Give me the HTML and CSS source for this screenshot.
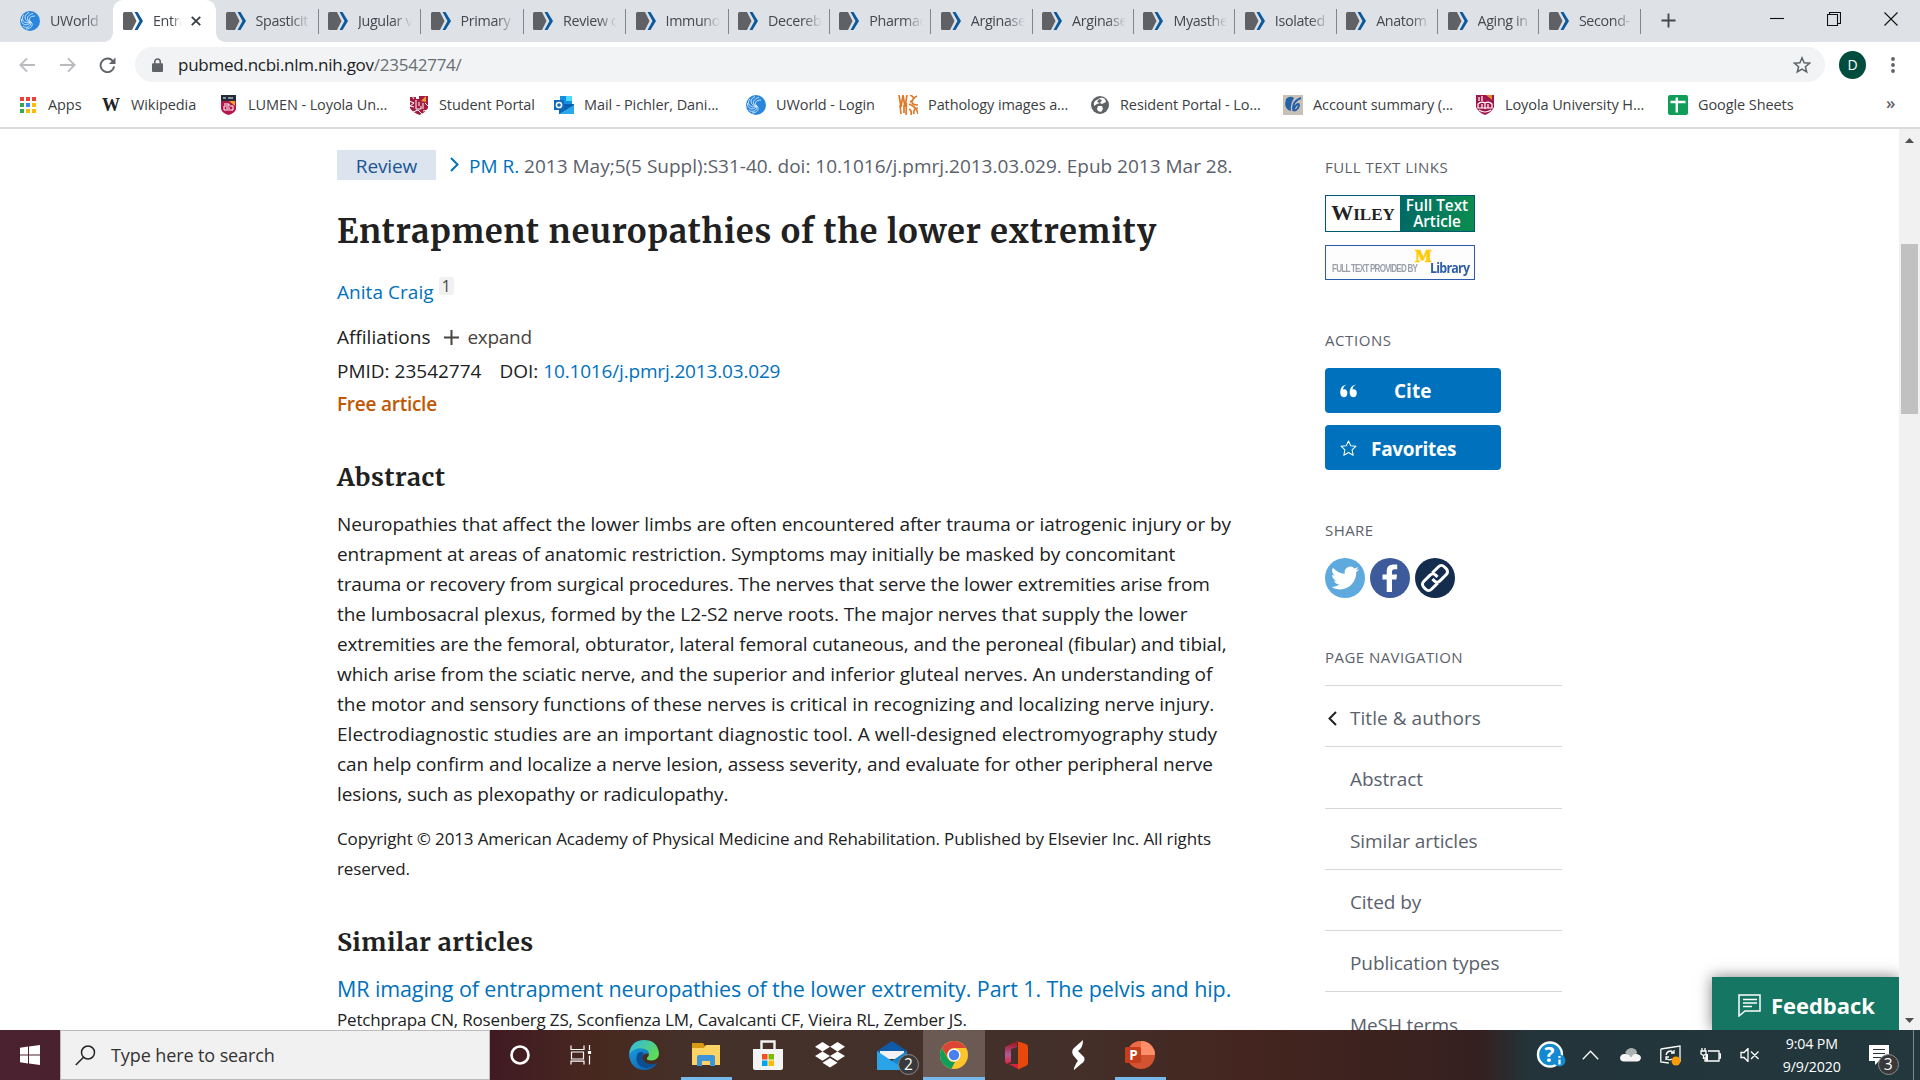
FILE: index.html
```html
<!DOCTYPE html>
<html lang="en">
<head>
<meta charset="utf-8">
<title>Entrapment neuropathies of the lower extremity - PubMed</title>
<link rel="stylesheet" href="styles.css">
</head>
<body>
<svg class="defs" width="0" height="0" aria-hidden="true">
  <defs>
    <linearGradient id="edgeBlue" x1="0" y1="0" x2="1" y2="1"><stop offset="0" stop-color="#1b9de2"/><stop offset="1" stop-color="#0c59a4"/></linearGradient>
    <linearGradient id="edgeGreen" x1="0" y1="0" x2="1" y2="0.6"><stop offset="0" stop-color="#2fb4ee"/><stop offset="1" stop-color="#5fdc56"/></linearGradient>
    <linearGradient id="officeRed" x1="0" y1="0" x2="0" y2="1"><stop offset="0" stop-color="#a30d12"/><stop offset=".6" stop-color="#b45a9a"/><stop offset="1" stop-color="#e0203c"/></linearGradient>
    <symbol id="pubmed" viewBox="0 0 20 18"><path d="M1.500 0H9l4.500 9L9 18H1.500Q0 18 0 16.500V1.500Q0 0 1.500 0z" fill="#5f6165"/><path d="M11.500 0H14.500L20 9l-5.500 9H11.500L16.500 9z" fill="#0b5a9d"/></symbol>
    <symbol id="uworld" viewBox="0 0 20 20"><circle cx="10" cy="10" r="10" fill="#2a86dc"/><g fill="none" stroke="#d9ecfb" stroke-width=".9"><path d="M11 11C8 9 9 5 15 5M11 11C6 10 6 4 13 2.500M11 11C4 11 3 4 9 1.500M11 11C4 14 0 8 4 4M11 11C7 16 1 14 1.500 8M11 11c0 5-5 7-8 4M11 11c3 3 0 7-5 7"/></g></symbol>
  </defs>
</svg>

<header class="browser">
  <div class="tabs">
    <div class="tab first"><svg class="fav"><use href="#uworld"/></svg><span>UWorld</span></div>
    <div class="tab active"><svg class="fav"><use href="#pubmed"/></svg><span>Entra</span><svg class="close" viewBox="0 0 10 10"><path d="M.8.8l8.400 8.400M9.200.8L.8 9.200"/></svg></div>
    <div class="tab"><svg class="fav"><use href="#pubmed"/></svg><span>Spasticit</span></div>
    <div class="tab"><svg class="fav"><use href="#pubmed"/></svg><span>Jugular v</span></div>
    <div class="tab"><svg class="fav"><use href="#pubmed"/></svg><span>Primary</span></div>
    <div class="tab"><svg class="fav"><use href="#pubmed"/></svg><span>Review o</span></div>
    <div class="tab"><svg class="fav"><use href="#pubmed"/></svg><span>Immuno</span></div>
    <div class="tab"><svg class="fav"><use href="#pubmed"/></svg><span>Decereb</span></div>
    <div class="tab"><svg class="fav"><use href="#pubmed"/></svg><span>Pharmac</span></div>
    <div class="tab"><svg class="fav"><use href="#pubmed"/></svg><span>Arginase</span></div>
    <div class="tab"><svg class="fav"><use href="#pubmed"/></svg><span>Arginase</span></div>
    <div class="tab"><svg class="fav"><use href="#pubmed"/></svg><span>Myasthe</span></div>
    <div class="tab"><svg class="fav"><use href="#pubmed"/></svg><span>Isolated</span></div>
    <div class="tab"><svg class="fav"><use href="#pubmed"/></svg><span>Anatom</span></div>
    <div class="tab"><svg class="fav"><use href="#pubmed"/></svg><span>Aging in</span></div>
    <div class="tab"><svg class="fav"><use href="#pubmed"/></svg><span>Second-</span></div>
    <svg class="newtab" viewBox="0 0 16 16"><path d="M8 .5v15M.5 8h15"/></svg>
    <div class="winctl">
      <svg width="14" height="14" viewBox="0 0 14 14"><path d="M0 6.500h14"/></svg>
      <svg width="14" height="14" viewBox="0 0 14 14"><path d="M.5 2.500h10v11h-10zM2.500 2.500v-2h11v11h-3"/></svg>
      <svg width="14" height="14" viewBox="0 0 14 14"><path d="M.5.5l13 13M13.500.5l-13 13"/></svg>
    </div>
  </div>

  <div class="toolbar">
    <svg class="nav off" viewBox="0 0 18 16"><path d="M17 8H2M8.500 1L1.500 8l7 7"/></svg>
    <svg class="nav off" viewBox="0 0 18 16"><path d="M1 8h15M9.500 1l7 7-7 7"/></svg>
    <svg class="nav" viewBox="0 0 18 16"><path d="M15 4.500A7.200 7.200 0 1 0 16 9.500"/><path class="solid" d="M17.500 0v7h-7z"/></svg>
    <div class="omnibox">
      <svg class="lock" viewBox="0 0 12 15"><path d="M1 5.500h10q1 0 1 1V14q0 1-1 1H1q-1 0-1-1V6.500q0-1 1-1z"/><path class="ring" d="M3 6V4a3 3 0 0 1 6 0v2"/></svg>
      <span class="url">pubmed.ncbi.nlm.nih.gov<i>/23542774/</i></span>
      <svg class="star" viewBox="0 0 18 18"><path d="M9 1.800l2.100 5 5.400.4-4.100 3.500 1.300 5.300L9 13.200 4.300 16l1.300-5.300L1.500 7.200l5.400-.4z"/></svg>
    </div>
    <div class="avatar">D</div>
    <svg class="dots" viewBox="0 0 4 16"><circle cx="2" cy="2" r="1.900"/><circle cx="2" cy="8" r="1.900"/><circle cx="2" cy="14" r="1.900"/></svg>
  </div>

  <nav class="bookmarks">
    <a><svg viewBox="0 0 20 20"><g fill="#ea4335"><path d="M2 2h4v4H2zM8 2h4v4H8zM14 2h4v4h-4z"/></g><path fill="#34a853" d="M2 8h4v4H2zM2 14h4v4H2z"/><path fill="#4285f4" d="M8 8h4v4H8z"/><path fill="#fbbc04" d="M14 8h4v4h-4zM8 14h4v4H8zM14 14h4v4h-4z"/></svg>Apps</a>
    <a><b class="wiki">W</b>Wikipedia</a>
    <a><svg viewBox="0 0 20 20"><path fill="#222b3a" d="M3 0h15v6H3z"/><path fill="#b5174b" d="M3 6h15v8q-1 4-7.500 6Q4 18 3 14z"/><path fill="#f0a22e" d="M11 6h6v5z"/><path stroke="#fff" fill="none" d="M6 9h5v2H6v4h9v-4h-3M8 13h4M5 3h3M10 3h5"/></svg>LUMEN - Loyola Un...</a>
    <a><svg viewBox="0 0 20 20"><path fill="#a31c3f" d="M1 2h6v2h3V1h9v12q-2 4-8.500 7Q3 17 1 13z"/><path fill="#eda02e" d="M12 6l5-5v6z"/><path stroke="#fff" fill="none" d="M0 6l5 2-4 3 4 1M7 5v9h5v-3M10 7v4M14 8v6M16 8l3 3M4 17l5-2 4 4M19 15l-5 1M3 1l2 3"/></svg>Student Portal</a>
    <a><svg viewBox="0 0 20 20"><path fill="#1490df" d="M6 1h12v10H6z"/><path fill="#50d9ff" d="M12 1h6v5h-6z"/><path fill="#0a5fb0" d="M5 9h15v10H5z"/><path fill="#28a8ea" d="M5 19l15-9v9z"/><path fill="#0f6cbd" d="M0 5h10v10H0z"/><circle cx="5" cy="10" r="2.600" fill="none" stroke="#fff" stroke-width="1.500"/></svg>Mail - Pichler, Dani...</a>
    <a><svg viewBox="0 0 20 20"><use href="#uworld"/></svg>UWorld - Login</a>
    <a><svg viewBox="0 0 20 20"><path fill="none" stroke="#e07a2b" stroke-width="1.700" d="M1 0l2 12 2-12 2 12 2-12M2 10l1 9M6 10v8M8.500 8l-.5 12M12 0q7 3 0 7M19 1q-5 3-5 6t6 3M11 9q8 3 9 10M11 14q3 1 2 6M20 13q-5 0-4 6"/></svg>Pathology images a...</a>
    <a><svg viewBox="0 0 20 20"><circle cx="10" cy="10" r="9" fill="#5f6368"/><path fill="#fff" d="M10 3q5-1 6 4l-4 2-2-1-3 1-3 2q-1-3 1-5zM8 11h4l1 3-2 3-3-1-1-2z"/><path fill="#5f6368" d="M9 4l3 1-2 3-3-1z"/></svg>Resident Portal - Lo...</a>
    <a><svg viewBox="0 0 20 20"><path fill="#c9c1b6" d="M0 0h20v20H0z"/><path fill="#2461a8" d="M3 4q4-4 8-1-4 6-3 13Q0 14 3 4z"/><path fill="none" stroke="#2461a8" stroke-width="2" d="M18 3q-8 3-8 10 1 5 5 0 2-4 0-4-3 1-5 7"/></svg>Account summary (...</a>
    <a><svg viewBox="0 0 20 20"><path fill="#a0154b" d="M1 0h18v12q-2 5-9 8-7-3-9-8z"/><path fill="#e08a2c" d="M11 0h6v5z"/><path stroke="#fff" fill="none" stroke-width="1.200" d="M4 2v4M7 1v5M3 9q3-3 7-1 4-2 7 1v4H3zM7 9v4M10 8v6M13 9v4M4 15q6 4 12 0"/></svg>Loyola University H...</a>
    <a><svg viewBox="0 0 20 20"><rect width="20" height="20" rx="2" fill="#0f9d58"/><path stroke="#fff" stroke-width="2.400" d="M2.500 7h15M8.800 2.500v15"/></svg>Google Sheets</a>
    <span class="more">»</span>
  </nav>
</header>

<div class="viewport">
  <div class="page">
    <main>
      <div class="source">
        <span class="badge">Review</span>
        <svg viewBox="0 0 9 15"><path d="M1 1l6.500 6.500L1 14"/></svg>
        <span class="cite"><a>PM R.</a> 2013 May;5(5 Suppl):S31-40. doi: 10.1016/j.pmrj.2013.03.029. Epub 2013 Mar 28.</span>
      </div>
      <h1>Entrapment neuropathies of the lower extremity</h1>
      <div class="author"><a>Anita Craig</a><sup>1</sup></div>
      <div class="line affil">Affiliations<svg viewBox="0 0 15 15"><path d="M7.500 0v15M0 7.500h15"/></svg><span class="expand">expand</span></div>
      <div class="line ids"><span>PMID: 23542774</span><span>DOI: <a>10.1016/j.pmrj.2013.03.029</a></span></div>
      <div class="line free">Free article</div>
      <h2>Abstract</h2>
      <p class="abstract">
        <span>Neuropathies that affect the lower limbs are often encountered after trauma or iatrogenic injury or by</span>
        <span>entrapment at areas of anatomic restriction. Symptoms may initially be masked by concomitant</span>
        <span>trauma or recovery from surgical procedures. The nerves that serve the lower extremities arise from</span>
        <span>the lumbosacral plexus, formed by the L2-S2 nerve roots. The major nerves that supply the lower</span>
        <span>extremities are the femoral, obturator, lateral femoral cutaneous, and the peroneal (fibular) and tibial,</span>
        <span>which arise from the sciatic nerve, and the superior and inferior gluteal nerves. An understanding of</span>
        <span>the motor and sensory functions of these nerves is critical in recognizing and localizing nerve injury.</span>
        <span>Electrodiagnostic studies are an important diagnostic tool. A well-designed electromyography study</span>
        <span>can help confirm and localize a nerve lesion, assess severity, and evaluate for other peripheral nerve</span>
        <span>lesions, such as plexopathy or radiculopathy.</span>
      </p>
      <p class="copyright">Copyright © 2013 American Academy of Physical Medicine and Rehabilitation. Published by Elsevier Inc. All rights<br>reserved.</p>
      <h2 class="similar">Similar articles</h2>
      <a class="result">MR imaging of entrapment neuropathies of the lower extremity. Part 1. The pelvis and hip.</a>
      <div class="result-authors">Petchprapa CN, Rosenberg ZS, Sconfienza LM, Cavalcanti CF, Vieira RL, Zember JS.</div>
    </main>

    <aside>
      <h3>FULL TEXT LINKS</h3>
      <div class="wiley"><span class="wl">W<small>ILEY</small></span><span class="wr">Full Text<br>Article</span></div>
      <div class="mlib"><span class="by">FULL TEXT PROVIDED BY</span><b class="m">M</b><span class="lib">Library</span></div>
      <h3 class="h-actions">ACTIONS</h3>
      <button><svg viewBox="0 0 18 15"><path fill="#fff" d="M7.500.5Q3.500 1.500 3.200 5.800 7.800 5 7.800 9.800 7.500 14 4 14 .3 14 .2 8.500.3 1.500 7.500.5zM17.500.5q-4 1-4.300 5.300 4.600-.8 4.600 4Q17.500 14 14 14q-3.700 0-3.800-5.500.1-7 7.300-8z"/></svg><span>Cite</span></button>
      <button class="fave"><svg viewBox="0 0 18 17"><path fill="none" stroke="#fff" stroke-width="1.100" stroke-linejoin="round" d="M9 1l2.300 5 5.700.6-4.200 3.900 1.200 5.700L9 13.300l-5 2.900 1.200-5.700L1 6.600 6.700 6z"/></svg><span>Favorites</span></button>
      <h3 class="h-share">SHARE</h3>
      <div class="share">
        <svg viewBox="0 0 40 40"><circle cx="20" cy="20" r="20" fill="#5eaade"/><path transform="translate(6 6) scale(1.170)" fill="#fff" d="M23.950 4.570a10 10 0 0 1-2.820.77 4.960 4.960 0 0 0 2.160-2.720c-.95.56-2 .96-3.130 1.180a4.920 4.920 0 0 0-8.380 4.480C7.690 8.100 4.070 6.130 1.640 3.160a4.820 4.820 0 0 0-.67 2.480c0 1.710.87 3.210 2.190 4.100a4.900 4.900 0 0 1-2.230-.62v.06a4.920 4.920 0 0 0 3.950 4.830 5 5 0 0 1-2.210.08 4.940 4.940 0 0 0 4.600 3.420A9.870 9.870 0 0 1 0 19.540a13.990 13.990 0 0 0 7.550 2.210c9.050 0 14-7.500 14-13.980 0-.21 0-.42-.02-.63a9.940 9.940 0 0 0 2.460-2.550z"/></svg>
        <svg viewBox="0 0 40 40"><circle cx="20" cy="20" r="20" fill="#3d5b9b"/><path fill="#fff" d="M16.700 34V21.500h-4.200v-5h4.200V13q0-6.500 6.500-6.500h4v4.700h-2.700q-2.500 0-2.500 2.400v2.900h5l-.6 5H22V34z"/></svg>
        <svg viewBox="0 0 40 40"><circle cx="20" cy="20" r="20" fill="#142c4e"/><g transform="rotate(-45 20 20)" fill="none" stroke="#fff" stroke-width="3"><path d="M18.500 25.500H9.500a4 4 0 0 1-4-4v-3a4 4 0 0 1 4-4h9a4 4 0 0 1 4 4v2.500"/><path d="M21.500 14.500h9a4 4 0 0 1 4 4v3a4 4 0 0 1-4 4h-9a4 4 0 0 1-4-4V19"/></g></svg>
      </div>
      <h3 class="h-nav">PAGE NAVIGATION</h3>
      <ul>
        <li><svg viewBox="0 0 9 15"><path d="M8 1L1.500 7.500 8 14"/></svg><span class="n1">Title &amp; authors</span></li>
        <li><span>Abstract</span></li>
        <li><span>Similar articles</span></li>
        <li><span>Cited by</span></li>
        <li><span>Publication types</span></li>
        <li><span>MeSH terms</span></li>
      </ul>
    </aside>
    <div class="feedback"><svg viewBox="0 0 23 23"><path d="M1 1h21v16H7l-6 5z"/><path d="M5 5.500h14M5 9h14M5 12.500h9"/></svg><span>Feedback</span></div>
  </div>
  <div class="scrollbar">
    <svg viewBox="0 0 9 5"><path d="M4.500 0L9 5H0z"/></svg>
    <div class="thumb"></div>
    <svg class="down" viewBox="0 0 9 5"><path d="M0 0h9L4.500 5z"/></svg>
  </div>
</div>

<footer class="taskbar">
  <div class="start"><svg width="20" height="20" viewBox="0 0 20 20"><path fill="#fff" d="M0 2.800L8 1.600v8H0zM9 1.400L20 0v9.600H9zM0 10.500h8v8L0 17.300zM9 10.500h11V20L9 18.600z"/></svg></div>
  <div class="search"><svg width="21" height="21" viewBox="0 0 21 21"><circle cx="13" cy="7.500" r="6.500"/><path d="M8.500 12.300L.8 20"/></svg><span>Type here to search</span></div>
  <div class="apps">
    <div><svg viewBox="0 0 30 30"><circle cx="15" cy="15" r="8.500" fill="none" stroke="#fff" stroke-width="2.600"/></svg></div>
    <div><svg viewBox="0 0 30 30" fill="none" stroke="#fff" stroke-width="1.200"><path d="M4 5.500v4h13v-4M4.500 12h12v7h-12zM4 24.500v-3.300h13v3.300M22.500 5v5M22.500 15.500v9"/><path fill="#fff" d="M21.500 11.500h2v2h-2z"/></svg></div>
    <div><svg viewBox="0 0 30 30"><path fill="url(#edgeBlue)" d="M0 15Q2 7 11 7q9 0 10 7-6-2-8 3-2 6 5 8 6 1 10-2-4 7-12 7Q2 30 0 15z"/><path fill="url(#edgeGreen)" d="M0 14Q2 0 15 0q13 0 15 13 0 7-7 7.500-6 0-5-2.500 4-4 0-8Q8 5 0 14z"/><path fill="#0b4f92" d="M9 13q-4 8 2 13 8 5 17-3-7 3-12-1-5-4-1-9-3-2-6 0z"/></svg></div>
    <div class="open"><svg viewBox="0 0 30 30"><path fill="#d99a13" d="M1 3h11l2 3v6H1z"/><path fill="#fdd365" d="M1 8h12l2-3h14v20H1z"/><path fill="#3e94d8" d="M6 26V17q0-2 2-2h14q2 0 2 2v9h-5v-5h-8v5z"/></svg></div>
    <div><svg viewBox="0 0 30 30"><path fill="none" stroke="#f2f2f2" stroke-width="2.400" d="M8.500 10V1.500h13V10"/><path fill="#f4f4f4" d="M0 9h30v19q0 2-2 2H2q-2 0-2-2z"/><path fill="#f25022" d="M9 14h5.500v5.500H9z"/><path fill="#7fba00" d="M15.500 14H21v5.500h-5.500z"/><path fill="#00a4ef" d="M9 20.500h5.500V26H9z"/><path fill="#ffb900" d="M15.500 20.500H21V26h-5.500z"/></svg></div>
    <div><svg viewBox="0 0 30 30"><path fill="#fff" d="M7.500 2L15 6.700 7.500 11.400 0 6.700zM22.500 2L30 6.700l-7.500 4.700L15 6.700zM7.500 11.400l7.500 4.700-7.500 4.700L0 16.100zM22.500 11.400l7.500 4.700-7.500 4.700-7.500-4.700zM15 18l7.500 4.700L15 27.500l-7.500-4.800z"/></svg></div>
    <div class="mail"><svg viewBox="0 0 30 30"><path fill="#0f5ba8" d="M0 11L15 1l15 10v4H0z"/><path fill="#f2f2f2" d="M3 11h24v8H3z"/><path fill="#2ba3e8" d="M0 11l15 10 15-10v19H0z"/><path fill="#1583cc" d="M30 11v19L15 21z"/></svg><i class="count">2</i></div>
    <div class="open current"><svg viewBox="0 0 30 30"><circle cx="15" cy="15" r="14" fill="#fbc52d"/><path fill="#db4437" d="M2.900 8A14 14 0 0 1 27.100 8H15a7 7 0 0 0-6.500 9z"/><path fill="#0f9d58" d="M2.900 8l6 10.500A7 7 0 0 0 16 22l-3.500 6.800A14 14 0 0 1 2.900 8z"/><circle cx="15" cy="15" r="6.500" fill="#fff"/><circle cx="15" cy="15" r="5.200" fill="#4a80ee"/></svg></div>
    <div><svg viewBox="0 0 30 30"><path fill="url(#officeRed)" d="M4 7L16 1v6l-6 2v13l-4 2q-2-1-2-3z"/><path fill="#d8213f" d="M8 24h10v5.500z"/><path fill="#e8480c" d="M16 1l9 3q2 1 2 3v16q0 2-2 3l-8 3.500V1z"/></svg></div>
    <div><svg viewBox="0 0 30 30"><path fill="#fff" d="M20 0q0 8-5 11l6 6q2 4-3 7l-7 6q-1-1 3-8l1-1-5-6q-2-4 1-7z"/></svg></div>
    <div class="open"><svg viewBox="0 0 30 30"><circle cx="16" cy="15" r="14" fill="#d35230"/><path fill="#ed6c47" d="M16 15V1A14 14 0 0 0 2 15z"/><path fill="#ff8f6b" d="M16 1a14 14 0 0 1 14 14H16z"/><rect y="7" width="16" height="16" rx="1.500" fill="#c43e1c"/><text x="4.300" y="20" font-family="Open Sans" font-weight="700" font-size="13.500" fill="#fff">P</text></svg></div>
  </div>
  <div class="tray">
    <div><svg width="30" height="30" viewBox="0 0 30 30"><circle cx="14" cy="14.500" r="12" fill="#1389cf" stroke="#fff" stroke-width="2.400"/><text x="8.500" y="22" font-family="Open Sans" font-weight="700" font-size="21" fill="#fff">?</text><circle cx="23.500" cy="20.500" r="6" fill="#1389cf"/><path stroke="#fff" stroke-width="2.200" d="M23.500 19.500v5M23.500 16v2"/></svg></div>
    <div><svg width="17" height="10" viewBox="0 0 17 10"><path class="ln" d="M.8 9.200L8.500 1.200l7.700 8"/></svg></div>
    <div><svg width="21" height="14" viewBox="0 0 21 14"><path fill="#a9b1b3" d="M5 5q2-5 7-5 5 1 5 5l-5 4z"/><path fill="#f4f5f5" d="M4 13.500q-4 0-4-4 1-4 5-3.500 4-.5 6 3 3-4 6-3 4 1 4 4-1 3.500-4 3.500z"/></svg></div>
    <div><svg width="21" height="21" viewBox="0 0 21 21"><path class="ln" d="M.8 4L20 1v16M.8 4v13l8 1M6 10q1-4 5-4l3 2M14 5v3h-3M6 15v-3h3M6 13q2 3 6 1"/><circle cx="16" cy="16" r="4.500" fill="#fb9b0c"/></svg></div>
    <div><svg width="21" height="15" viewBox="0 0 21 15"><path class="ln" d="M8 3h11v10H5V9M19 6h1.500v4H19M2 0v3M5 0v3M1 3h5v3L3.500 7.500 1 6zM3.500 8v3"/><path fill="#fff" d="M5.500 6H8v7H5.500z"/></svg></div>
    <div><svg width="20" height="14" viewBox="0 0 20 14"><path class="ln" d="M1 4.500h3l4-4v13l-4-4H1zM11 3.500l7.500 7.500M18.500 3.500L11 11"/></svg></div>
  </div>
  <div class="clock"><span>9:04 PM</span><span>9/9/2020</span></div>
  <div class="notif"><svg width="20" height="20" viewBox="0 0 20 20"><path fill="#fff" d="M0 0h20v16H10l-4 4v-4H0z"/><path stroke="#23363a" d="M4 4.500h12M4 8.500h12M4 12.500h8"/></svg><i class="count">3</i></div>
</footer>
</body>
</html>
```
FILE: styles.css
```css
* { box-sizing: border-box; }
body {
  margin: 0;
  width: 1920px;
  height: 1080px;
  overflow: hidden;
  display: flex;
  flex-direction: column;
  font-family: "Open Sans", sans-serif;
  color: #212121;
  background: #fff;
  white-space: nowrap;
}
svg { flex: none; display: block; }
.defs { position: absolute; }
i { font-style: normal; }

/* Browser chrome */
.browser { height: 129px; border-bottom: 2px solid #dadce0; }
.tabs { display: flex; height: 42px; background: #dee1e6; position: relative; }
.tab {
  flex: none;
  display: flex;
  align-items: center;
  width: 101.36px;
  height: 42px;
  padding-left: 9.5px;
  font-size: 14.3px;
  letter-spacing: -0.35px;
  color: #45494d;
  background: linear-gradient(#80868b, #80868b) 100% 9px / 1px 25px no-repeat;
}
.tab:nth-child(n+3):nth-child(-n+7) { width: 102.5px; }
.tab .fav { width: 20px; height: 18px; }
.tab span {
  width: 54px;
  margin: 0 0 1px 10px;
  overflow: hidden;
  -webkit-mask-image: linear-gradient(90deg, #000 65%, transparent 100%);
  mask-image: linear-gradient(90deg, #000 65%, transparent 100%);
}
.tab.first { width: 113px; padding-left: 20px; background: none; }
.tab.first .fav { height: 20px; }
.tab.active {
  position: relative;
  width: 103px;
  padding-left: 10px;
  background: #fff;
  border-radius: 10px 10px 0 0;
}
.tab.active::before, .tab.active::after {
  content: "";
  position: absolute;
  bottom: 0;
  width: 9px;
  height: 9px;
}
.tab.active::before { left: -9px; background: radial-gradient(circle at 0 0, transparent 8.5px, #fff 9px); }
.tab.active::after { right: -9px; background: radial-gradient(circle at 100% 0, transparent 8.5px, #fff 9px); }
.tab.active span { width: 29px; }
.close { width: 10px; height: 10px; margin-left: 9px; stroke: #3c4043; stroke-width: 1.9; }
.newtab { width: 15px; height: 15px; margin: 13px 0 0 20px; fill: none; stroke: #45494d; stroke-width: 2; }
.winctl { display: flex; gap: 43px; margin: 12px 22px 0 auto; fill: none; stroke: #111; stroke-width: 1.1; }

.toolbar { display: flex; align-items: center; height: 45px; padding-left: 19px; }
.nav { width: 17px; height: 16px; margin-right: 23px; fill: none; stroke: #5f6368; stroke-width: 2; }
.nav.off { stroke: #b9bbbe; }
.nav .solid { fill: #5f6368; stroke: none; }
.omnibox {
  display: flex;
  align-items: center;
  width: 1690px;
  height: 35px;
  margin-left: -4px;
  padding: 0 14px 0 17px;
  border-radius: 18px;
  background: #f1f3f4;
}
.lock { width: 11px; height: 14px; fill: #5f6368; }
.lock .ring { fill: none; stroke: #5f6368; stroke-width: 1.7; }
.url { margin-left: 15px; font-size: 17px; letter-spacing: -0.25px; color: #202124; }
.url i { color: #6a6e73; }
.star { width: 18px; height: 18px; margin-left: auto; fill: none; stroke: #5f6368; stroke-width: 1.5; }
.avatar {
  width: 27px; height: 28px; margin-left: 14px;
  border-radius: 50%;
  background: #004d40; color: #fff;
  font-size: 14px; line-height: 27px; text-align: center;
}
.dots { width: 4px; height: 16px; margin-left: 24.500px; fill: #5f6368; }

.bookmarks {
  display: grid;
  grid-template-columns: 83px 117px 191px 145px 192px 152px 192px 193px 192px 193px 218px auto;
  align-items: center;
  height: 35px;
  padding-left: 18px;
  font-size: 14.5px;
  letter-spacing: -0.09px;
  color: #3c4043;
}
.bookmarks a { display: flex; align-items: center; gap: 10px; }
.bookmarks svg, .wiki { width: 20px; height: 20px; }
.wiki { font: 700 18px/20px "Liberation Serif", serif; color: #222; text-align: center; }
.more { font-size: 17px; font-weight: 600; line-height: 18px; padding-bottom: 3px; color: #5f6368; }

/* Article page */
.viewport { display: flex; height: 901px; overflow: hidden; }
.page { position: relative; display: flex; width: 1899px; padding-left: 337px; }
main { width: 988px; padding-top: 21px; font-size: 19px; line-height: 30px; }
a { color: #0071bc; }
.bookmarks a { color: inherit; }
.source { display: flex; align-items: center; height: 30px; color: #5b616b; }
.badge { width: 99px; height: 30px; padding-top: 1px; background: #dce4ef; color: #205493; text-align: center; letter-spacing: -0.1px; }
.cite { padding-top: 2px; }
.source svg, li svg { width: 9px; height: 15px; fill: none; stroke: #0071bc; stroke-width: 2; }
.source svg { margin: 0 10px 1px 14px; }
h1, h2, h3, p, ul { margin: 0; padding: 0; }
h1, h2 { font-family: Merriweather, "Noto Serif", "DejaVu Serif Condensed", serif; font-weight: 700; }
h1 { margin-top: 30px; font-size: 32.500px; line-height: 44px; letter-spacing: 0.9px; }
h2 { margin-top: 39px; font-size: 25px; line-height: 34px; letter-spacing: 0.55px; }
.author { display: flex; margin-top: 23px; height: 30px; letter-spacing: 0.05px; }
.author sup {
  width: 15px; height: 18px; margin: 0 0 0 5px;
  background: #f1f1f1; border-radius: 2px; color: #494440;
  font-size: 15.5px; line-height: 18px; text-align: center;
}
.line { display: flex; align-items: center; height: 33.5px; }
.affil { margin-top: 13.500px; }
.affil svg { width: 15px; height: 15px; margin: 0 8px 0 14px; stroke: #494440; stroke-width: 2; }
.expand { letter-spacing: -0.3px; color: #494440; }
.ids { gap: 18px; }
.ids a { letter-spacing: -0.17px; }
.free { color: #c05600; font-weight: 600; letter-spacing: -0.25px; }
.abstract { margin-top: 15px; }
.abstract span { display: block; letter-spacing: -0.07px; }
.abstract span:nth-child(3) { letter-spacing: -0.14px; }
.abstract span:nth-child(5) { letter-spacing: -0.12px; }
.abstract span:nth-child(7) { letter-spacing: -0.02px; }
.abstract span:nth-child(8) { letter-spacing: 0.03px; }
.abstract span:nth-child(9) { letter-spacing: -0.1px; }
.abstract span:nth-child(10) { letter-spacing: -0.12px; }
.copyright { margin-top: 15px; font-size: 17px; letter-spacing: -0.14px; }
h2.similar { margin-top: 41px; }
.result { display: block; margin-top: 14px; font-size: 21.5px; line-height: 32px; letter-spacing: -0.1px; }
.result-authors { font-size: 17px; letter-spacing: -0.17px; }

/* Sidebar */
aside { width: 237px; padding-top: 28px; }
h3 { font-size: 15px; font-weight: 400; line-height: 20px; letter-spacing: 0.45px; color: #5b616b; }
.wiley {
  display: flex; width: 150px; height: 37px; margin-top: 18px;
  border: 1px solid #005a6e;
  background: linear-gradient(90deg, #006a66 50%, #0b8c50);
}
.wl {
  width: 74px; background: #fff; color: #222;
  font: 700 22px/34px "Liberation Serif", serif; text-align: center;
}
.wl small { font-size: 17px; }
.wr { flex: 1; color: #fff; font-size: 15.3px; font-weight: 600; line-height: 16px; text-align: center; padding-top: 1px; }
.mlib {
  display: flex; align-items: flex-start; width: 150px; height: 35px; margin-top: 13px; padding-left: 6px;
  border: 1px solid #2b5ba8; background: #fdfdfd;
}
.by { width: 83px; margin-top: 13px; font: 700 10.5px/19px "Liberation Sans", sans-serif; letter-spacing: -1px; color: #9a9fa9; transform-origin: left; transform: scaleX(.77); overflow: visible; }
.m { width: 15px; margin-top: 2px; font: 700 17px/16px "DejaVu Serif Condensed", serif; color: #ffcb05; -webkit-text-stroke: .7px #ffcb05; }
.lib { margin-top: 11px; font-size: 14.5px; font-weight: 700; line-height: 22px; letter-spacing: -0.9px; color: #2f5fa8; transform-origin: left; transform: scaleX(.86); }
.h-actions { margin-top: 50px; letter-spacing: 0.58px; }
button {
  display: flex; align-items: center;
  width: 176px; height: 45px; margin: 0 0 12px; padding: 0 15px;
  border: 0; border-radius: 4px;
  background: #0071bc; color: #fff;
  font: 700 19px "Open Sans", sans-serif;
}
.h-actions + button { margin-top: 18px; }
button svg { width: 17px; height: 16px; }
button span { margin-left: 14px; letter-spacing: -0.3px; }
.h-actions + button span { margin-left: 37px; letter-spacing: 0; }
.fave span { padding-top: 2px; }
.h-share { margin-top: 50px; }
.share { display: flex; gap: 5px; margin-top: 18px; }
.share svg { width: 40px; height: 40px; }
.h-nav { margin-top: 49px; }
ul { margin-top: 18px; list-style: none; }
li {
  display: flex; align-items: center;
  height: 61.3px; padding: 4px 0 0 25px;
  border-top: 1px solid #d6d7d9;
  font-size: 19px; letter-spacing: -0.1px; color: #5b616b;
}
li svg { margin: 0 13px 0 -22px; stroke: #212121; }
.n1 { letter-spacing: 0.05px; }

.feedback {
  position: absolute; right: 0; bottom: 0;
  display: flex; align-items: center;
  width: 187px; height: 53px; padding: 3px 0 0 26px;
  background: #157663; color: #fff;
  box-shadow: 0 0 14px rgba(0, 0, 0, .5);
  font-size: 22px; font-weight: 700; letter-spacing: -0.05px;
}
.feedback svg { width: 23px; height: 23px; margin-right: 10px; fill: none; stroke: #fff; stroke-width: 1.5; }

.scrollbar {
  position: relative; z-index: 1;
  display: flex; flex-direction: column; align-items: center;
  width: 21px; background: #f1f1f1;
}
.scrollbar svg { width: 9px; height: 5px; margin-top: 9px; fill: #505050; }
.thumb { width: 17px; height: 170px; margin-top: 101px; background: #c1c1c1; }
.scrollbar .down { margin: auto 0 7px; }

/* Taskbar */
.taskbar {
  position: relative; z-index: 2;
  display: flex; height: 50px;
  background: linear-gradient(90deg, #4b2230 0, #401a23 490px, #482920 600px, #44312a 700px, #44302a 1060px, #44251f 1250px, #35201f 1480px, #23343a 1530px, #22383d 1920px);
}
.start { display: flex; align-items: center; width: 60px; padding-left: 20px; }
.search {
  display: flex; align-items: center;
  width: 430px; padding-left: 14px;
  border: 1px solid #bbb; background: #f1f1f1;
  font-size: 18px; letter-spacing: -0.1px; color: #333;
}
.search svg { margin-right: 15px; fill: none; stroke: #222; stroke-width: 1.5; }
.apps { display: flex; margin-left: -1px; }
.apps > div { position: relative; width: 62px; display: flex; align-items: center; justify-content: center; }
.apps svg { width: 30px; height: 30px; }
.apps .open::after { content: ""; position: absolute; bottom: 0; width: 51px; height: 3px; background: #76b9ed; }
.apps .current { background: #6b5a54; }
.apps .current::after { width: 100%; }
.count {
  position: absolute;
  width: 21px; height: 21px;
  border: 1px solid #8c8c8c; border-radius: 50%;
  background: #39393b; color: #fff;
  font-size: 15.5px; line-height: 19px; text-align: center;
}
.mail .count { right: 4px; bottom: 5px; }
.tray { display: flex; margin-left: 360px; }
.tray div { width: 39.8px; display: flex; align-items: center; justify-content: center; }
.ln { fill: none; stroke: #fff; stroke-width: 1.3; }
.clock {
  display: flex; flex-direction: column; align-items: center;
  width: 76px; margin-left: 4px; padding-top: 2px;
  font-size: 14.2px; line-height: 23px; letter-spacing: -0.15px; color: #fff;
}
.notif { position: relative; width: 64px; padding: 15px 0 0 19px; border-right: 1px solid #7b8a8d; }
.notif .count { left: 28px; top: 24px; }
```
